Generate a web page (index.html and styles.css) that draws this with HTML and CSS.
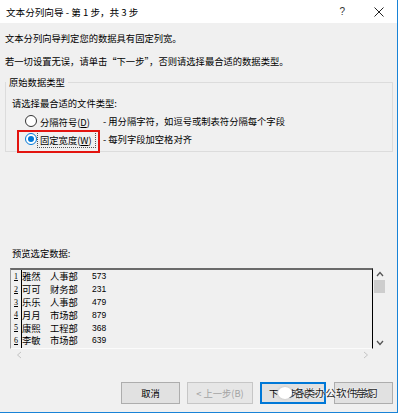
FILE: index.html
```html
<!DOCTYPE html>
<html lang="zh-CN">
<head>
    <meta charset="UTF-8">
    <meta name="viewport" content="width=device-width, initial-scale=1.0">
    <title>文本分列向导</title>
    <link rel="stylesheet" href="styles.css">
</head>
<body>

    <div class="window">
        <div class="titlebar">
            <span class="title">文本分列向导 - 第 1 步，共 3 步</span>
            <span class="help">?</span>
            <svg class="close" width="10" height="10" viewBox="0 0 10 10">
                <path d="M0.5 0.5 L9.5 9.5 M9.5 0.5 L0.5 9.5" stroke="#222" stroke-width="1" fill="none"/>
            </svg>
        </div>

        <div class="content">
            <p class="line first">文本分列向导判定您的数据具有固定列宽。</p>
            <p class="line second">若一切设置无误，请单击“下一步”，否则请选择最合适的数据类型。</p>

            <fieldset class="group">
                <legend>原始数据类型</legend>
                <p class="line prompt">请选择最合适的文件类型:</p>
                <div class="radio-row">
                    <span class="radio"></span>
                    <span class="label">分隔符号(<u>D</u>)</span>
                    <span class="desc">- 用分隔字符，如逗号或制表符分隔每个字段</span>
                </div>
                <div class="radio-row">
                    <span class="radio checked"></span>
                    <span class="label focused">固定宽度(<u>W</u>)</span>
                    <span class="desc">- 每列字段加空格对齐</span>
                    <span class="highlight"></span>
                </div>
            </fieldset>

            <p class="line preview-title">预览选定数据:</p>

            <div class="preview">
                <div class="grid">
                    <div class="row"><span class="num">1</span><span class="name">雅然</span><span class="dept">人事部</span><span class="val">573</span></div>
                    <div class="row"><span class="num">2</span><span class="name">可可</span><span class="dept">财务部</span><span class="val">231</span></div>
                    <div class="row"><span class="num">3</span><span class="name">乐乐</span><span class="dept">人事部</span><span class="val">479</span></div>
                    <div class="row"><span class="num">4</span><span class="name">月月</span><span class="dept">市场部</span><span class="val">879</span></div>
                    <div class="row"><span class="num">5</span><span class="name">康熙</span><span class="dept">工程部</span><span class="val">368</span></div>
                    <div class="row"><span class="num">6</span><span class="name">李敏</span><span class="dept">市场部</span><span class="val">639</span></div>
                    <div class="row"><span class="num"></span></div>
                </div>
                <div class="vscroll">
                    <svg width="8" height="6" viewBox="0 0 8 6"><path d="M1 5 L4 1.5 L7 5" stroke="#555" stroke-width="1.3" fill="none"/></svg>
                    <div class="thumb"></div>
                    <svg class="down" width="8" height="6" viewBox="0 0 8 6"><path d="M1 1 L4 4.5 L7 1" stroke="#555" stroke-width="1.3" fill="none"/></svg>
                </div>
                <div class="hscroll">
                    <svg width="6" height="8" viewBox="0 0 6 8"><path d="M5 1 L1.5 4 L5 7" stroke="#c4c4c4" stroke-width="1" fill="none"/></svg>
                    <svg width="6" height="8" viewBox="0 0 6 8"><path d="M1 1 L4.5 4 L1 7" stroke="#c4c4c4" stroke-width="1" fill="none"/></svg>
                </div>
            </div>

            <div class="buttons">
                <button class="btn small">取消</button>
                <button class="btn disabled">&lt; 上一步(B)</button>
                <button class="btn default">下一步(N) &gt;</button>
                <button class="btn small">完成</button>
                <div class="watermark">
                    <span class="logo"></span>
                    <span>各类办公软件学习</span>
                </div>
            </div>
        </div>
    </div>

</body>
</html>
```

FILE: styles.css
```css
body {
    margin: 0;
    background: #fff;
    font-family: "Noto Sans CJK SC", "Noto Sans", sans-serif;
    font-size: 9.3px;
    color: #000;
}
.window {
    width: 397px;
    height: 412px;
    background: #f0f0f0;
    border-right: 1px solid #1883d7;
    border-bottom: 1px solid #1883d7;
    display: flex;
    flex-direction: column;
}
.titlebar {
    height: 23px;
    background: #fff;
    display: flex;
    align-items: center;
    padding-left: 6px;
    font-size: 9.6px;
}
.title {
    flex: 1;
}
.help {
    font-family: "Liberation Sans", sans-serif;
    font-size: 10px;
    color: #333;
    margin-right: 29px;
}
.close {
    margin-right: 13px;
}
.content {
    padding: 0 4px 0 5px;
    position: relative;
}
.line {
    margin: 0;
    line-height: 12px;
    white-space: nowrap;
}
.first {
    margin-top: 9px;
}
.second {
    margin-top: 11px;
}
.group {
    margin: 9px 0 0 0;
    padding: 0 0 3px 0;
    border: 1px solid #dcdcdc;
    min-width: 0;
}
.group legend {
    padding: 0 3px;
    line-height: 12px;
}
.prompt {
    margin-top: 9px;
    padding-left: 6px;
}
.radio-row {
    height: 18px;
    display: flex;
    align-items: center;
    padding-left: 19px;
    position: relative;
    white-space: nowrap;
}
.radio-row:nth-of-type(1) {
    margin-top: 3px;
}
.radio {
    width: 10px;
    height: 10px;
    border: 1px solid #333;
    border-radius: 50%;
    background: #fff;
    position: relative;
}
.radio.checked {
    border-color: #0078d7;
}
.radio.checked::after {
    content: "";
    position: absolute;
    left: 2px;
    top: 2px;
    width: 6px;
    height: 6px;
    border-radius: 50%;
    background: #0078d7;
}
.label {
    width: 59px;
    height: 17px;
    line-height: 17px;
    margin-left: 0;
    padding-left: 2px;
    border: 1px dotted transparent;
    box-sizing: border-box;
}
.label u {
    text-decoration-thickness: 1px;
    text-underline-offset: 1px;
}
.label.focused {
    border-color: #555;
}
.desc {
    margin-left: 7px;
}
.highlight {
    position: absolute;
    left: 11px;
    top: 0;
    width: 79px;
    height: 19px;
    border: 2px solid #e3140f;
}
.preview-title {
    margin-top: 95px;
    padding-left: 7px;
}
.preview {
    margin: 9px 0 0 5px;
    width: 376px;
    display: grid;
    grid-template-columns: 363px 13px;
    grid-template-rows: 81px 11px;
}
.grid {
    border-top: 2px solid #6a6a6a;
    border-left: 1px solid #9a9a9a;
    border-right: 1px solid #000;
    border-bottom: 1px solid #fbfbfb;
    font-family: "Noto Sans CJK SC", sans-serif;
    overflow: hidden;
}
.row {
    height: 12.8px;
    display: flex;
    align-items: center;
    white-space: nowrap;
}
.num {
    width: 10px;
    height: 100%;
    border-right: 1px solid #000;
    font-family: "Liberation Serif", serif;
    font-size: 8px;
    text-decoration: underline;
    text-align: center;
    line-height: 14px;
}
.name {
    width: 28px;
}
.dept {
    width: 42px;
}
.val {
    font-family: "Liberation Sans", sans-serif;
    font-size: 8.5px;
}
.vscroll {
    display: flex;
    flex-direction: column;
    align-items: center;
    padding-top: 3px;
}
.thumb {
    width: 11px;
    height: 13px;
    background: #cdcdcd;
    margin-top: 3px;
}
.vscroll .down {
    margin-top: auto;
    margin-bottom: 3px;
}
.hscroll {
    display: flex;
    justify-content: space-between;
    align-items: center;
    padding: 0 4px 0 6px;
}
.buttons {
    margin-top: 22px;
    display: flex;
    justify-content: flex-end;
    gap: 7px;
    padding-right: 0;
    position: relative;
}
.btn {
    width: 66px;
    height: 22px;
    padding: 0;
    font-family: "Noto Sans CJK SC", sans-serif;
    font-size: 9.3px;
    background: #e1e1e1;
    border: 1px solid #adadad;
    color: #000;
}
.btn.small {
    width: 59px;
}
.btn.disabled {
    color: #a3a3a3;
    border-color: #c6c6c6;
    background: #e6e6e6;
}
.btn.default {
    border-color: #0078d7;
    box-shadow: inset 0 0 0 1px #0078d7;
    margin-right: 1px;
}
.watermark {
    position: absolute;
    left: 273px;
    top: 3px;
    display: flex;
    align-items: center;
    gap: 2px;
    font-size: 10.5px;
    color: #1e1e1e;
    text-shadow: 0 0 2px #fff, 0 0 2px #fff;
    white-space: nowrap;
}
.logo {
    width: 14px;
    height: 12px;
    border-radius: 50%;
    background: #fff;
    box-shadow: 0 0 3px #bbb;
}
```
